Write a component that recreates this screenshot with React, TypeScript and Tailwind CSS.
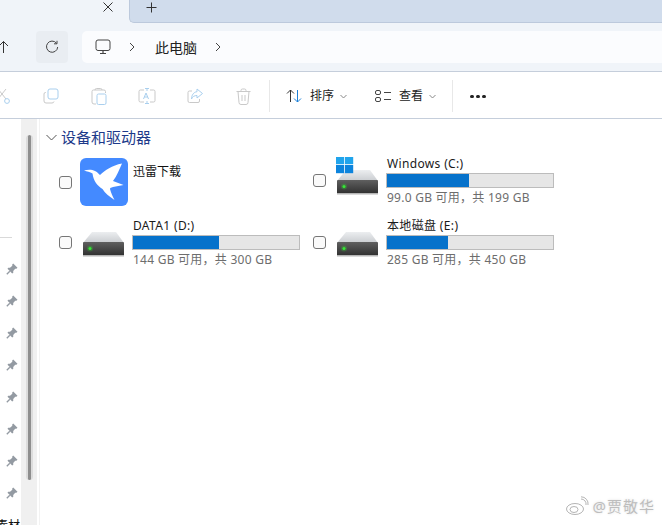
import React from "react";

const sans = "[font-family:'Noto_Sans','Noto_Sans_CJK_SC',sans-serif]";

function Bird() {
  return (
    <div className="w-12 h-12 rounded-[6px] bg-[#448aff] shrink-0 flex items-center justify-center">
      <svg width="48" height="48" viewBox="0 0 48 48">
        <path
          d="M4 12.5 C8 11.5 12 11.5 15 13 C17 14 18.5 15.5 20 17 C25 12 32 7.5 42 5.5 C39 12 37 18 33 23 L43.5 27 L33 29 C31 29.5 30 30 30 31 C31 35 32.5 38 34.5 42 C29 38.5 25 35 22.5 31 C17.5 28 13.5 23 12.5 15.5 C10 14 7 13.5 4 12.5 Z"
          fill="#fff"
        />
      </svg>
    </div>
  );
}

function Disk({ win }: { win?: boolean }) {
  const id = win ? "w" : "n";
  return (
    <svg width="48" height="48" viewBox="0 0 48 48" className="shrink-0">
      <defs>
        <linearGradient id={`top${id}`} x1="0" y1="0" x2="0" y2="1">
          <stop offset="0" stopColor="#eceef0" />
          <stop offset="1" stopColor="#c9ccd0" />
        </linearGradient>
        <linearGradient id={`front${id}`} x1="0" y1="0" x2="0" y2="1">
          <stop offset="0" stopColor="#5f5f5f" />
          <stop offset="1" stopColor="#2f2f2f" />
        </linearGradient>
      </defs>
      <path d="M12 13 H36 L44 24 H3 Z" fill={`url(#top${id})`} />
      <rect x="3" y="23" width="41" height="14" rx="1" fill={`url(#front${id})`} />
      <rect x="3" y="36" width="41" height="1.5" fill="#b5b5b5" />
      <circle cx="10" cy="29.5" r="3" fill="#2ee62e" opacity="0.25" />
      <circle cx="10" cy="29.5" r="1.5" fill="#35e835" />
      {win && (
        <g>
          <rect x="2" y="-1" width="8.2" height="8.2" fill="#20a4ec" />
          <rect x="11" y="-1" width="8.2" height="8.2" fill="#20a4ec" />
          <rect x="2" y="8" width="8.2" height="8.2" fill="#0c84dd" />
          <rect x="11" y="8" width="8.2" height="8.2" fill="#0c84dd" />
        </g>
      )}
    </svg>
  );
}

function Check() {
  return <div className="w-[13px] h-[13px] rounded-[3px] border border-[#767676] bg-[#fafafa] shrink-0" />;
}

function Drive({ name, free, pct, win }: { name: string; free: string; pct: number; win?: boolean }) {
  return (
    <div className="flex items-center h-[61px]">
      <Check />
      <div className="ml-[8px]">
        <Disk win={win} />
      </div>
      <div className="ml-[4px] w-[168px] flex flex-col">
        <div className="pl-[1px] text-[12px] leading-[16px] text-[#1a1a1a] tracking-[0.35px]">{name}</div>
        <div className="h-[15px] mt-[1px] border border-[#bcbcbc] bg-[#e6e6e6]">
          <div className="h-full bg-[#0672cb]" style={{ width: `${pct}%` }} />
        </div>
        <div className="pl-[1px] text-[12px] leading-[16px] mt-[2px] -mb-[1px] text-[#6d6d6d] tracking-[0.25px]">{free}</div>
      </div>
    </div>
  );
}

function Pin() {
  return (
    <svg width="12" height="12" viewBox="0 0 12 12">
      <path d="M7.2 .5 L11.5 4.8 L10.4 5.8 L9.2 5.7 L7.2 8 L7.3 9.8 L6.2 10.5 L1.5 5.8 L2.2 4.8 L4 4.8 L6.3 2.8 L6.2 1.4 Z" fill="#939aa2" />
      <path d="M3.8 8.2 L.8 11.2" stroke="#939aa2" strokeWidth="1.3" fill="none" />
    </svg>
  );
}

function ToolBtn({ children }: { children: React.ReactNode }) {
  return <div className="w-[48px] flex items-center justify-center shrink-0">{children}</div>;
}

const blue = "#a9cfee";
const gray = "#c9c9c9";

export default function App() {
  return (
    <div className={`w-[662px] h-[525px] overflow-hidden relative bg-white flex flex-col ${sans}`}>
      {/* tabs */}
      <div className="h-[23px] flex bg-[#f0f4f9] shrink-0">
        <div className="w-[129px] flex justify-end pr-[15px] pt-[1px] shrink-0">
          <svg width="12" height="12" viewBox="0 0 12 12">
            <path d="M1.5 1.5 L10.5 10.5 M10.5 1.5 L1.5 10.5" stroke="#333" strokeWidth="1" fill="none" />
          </svg>
        </div>
        <div className="flex-1 bg-[#d0dcec] rounded-bl-[5px] border-l border-b border-[#bcc9dc] pl-[16px] pt-[2px]">
          <svg width="11" height="11" viewBox="0 0 11 11">
            <path d="M5.5 0.5 V10.5 M0.5 5.5 H10.5" stroke="#333" strokeWidth="1" fill="none" />
          </svg>
        </div>
      </div>
      {/* address row */}
      <div className="h-[49px] shrink-0 bg-[#f0f4f9] border-b border-[#c5cedb] flex items-start pt-[8px]">
        <div className="w-[36px] h-[32px] flex items-center shrink-0">
          <svg width="10" height="14" viewBox="0 0 10 14" className="-ml-[1px]">
            <path d="M4.5 13 V1.5 M0 6 L4.5 1.5 L9 6" stroke="#333" strokeWidth="1" fill="none" />
          </svg>
        </div>
        <div className="w-[32px] h-[32px] rounded-[4px] bg-[#e9edf2] flex items-center justify-center shrink-0">
          <svg width="14" height="14" viewBox="0 0 14 14">
            <path d="M11.5 3.2 A5.6 5.6 0 1 0 12.7 7" stroke="#444" strokeWidth="1" fill="none" />
            <path d="M12 .8 V3.8 H9" stroke="#444" strokeWidth="1" fill="none" />
          </svg>
        </div>
        <div className="ml-[14px] flex-1 h-[32px] bg-[#fbfcfe] rounded-l-[5px] flex items-center pl-[13px]">
          <svg width="16" height="16" viewBox="0 0 16 16">
            <rect x="1" y="1" width="14" height="10.5" rx="2" stroke="#444" fill="none" />
            <path d="M5 14.5 H11 M8 11.5 V14.5" stroke="#444" strokeWidth="1.2" fill="none" />
          </svg>
          <svg width="6" height="10" viewBox="0 0 6 10" className="ml-[18px]">
            <path d="M1 1 L5 5 L1 9" stroke="#444" fill="none" />
          </svg>
          <span className="ml-[20px] text-[14px] text-[#222] w-[42px] whitespace-nowrap">此电脑</span>
          <svg width="6" height="10" viewBox="0 0 6 10" className="ml-[18px]">
            <path d="M1 1 L5 5 L1 9" stroke="#444" fill="none" />
          </svg>
        </div>
      </div>
      {/* toolbar */}
      <div className="h-[47px] shrink-0 bg-white border-b border-[#c5cedb] flex items-center pt-[2px]">
        <div className="w-[27px] shrink-0">
          <svg width="18" height="16" viewBox="0 0 18 16" className="-ml-[7px]">
            <path d="M13 1 L5 11 M5 1 L13 11" stroke={gray} fill="none" />
            <circle cx="4" cy="13" r="2.4" stroke={blue} fill="none" />
            <circle cx="14" cy="13" r="2.4" stroke={blue} fill="none" />
          </svg>
        </div>
        <div className="flex">
          <ToolBtn>
            <svg width="16" height="16" viewBox="0 0 16 16" fill="none">
              <path d="M3 4.5 H2.5 A1.5 1.5 0 0 0 1 6 V13 A2 2 0 0 0 3 15 H9 A2 2 0 0 0 11 13.5" stroke={gray} />
              <rect x="5" y="1" width="10" height="10" rx="2" stroke={blue} />
            </svg>
          </ToolBtn>
          <ToolBtn>
            <svg width="16" height="18" viewBox="0 0 16 18" fill="none">
              <path d="M4 3 H2.5 A1.5 1.5 0 0 0 1 4.5 V15 A2 2 0 0 0 3 17 H5 M11 3 H13 A1.5 1.5 0 0 1 14.5 4.5 V6 M4 3 A1.5 1.5 0 0 1 5.5 1.5 H9.5 A1.5 1.5 0 0 1 11 3 Z" stroke={gray} />
              <rect x="6" y="7" width="9" height="10.5" rx="1.5" stroke={blue} />
            </svg>
          </ToolBtn>
          <ToolBtn>
            <svg width="18" height="16" viewBox="0 0 18 16" fill="none">
              <path d="M6 2 H2.5 A1.5 1.5 0 0 0 1 3.5 V12.5 A1.5 1.5 0 0 0 2.5 14 H6 M12 2 H15.5 A1.5 1.5 0 0 1 17 3.5 V12.5 A1.5 1.5 0 0 1 15.5 14 H12" stroke={gray} />
              <path d="M7 .5 H11 M7 15.5 H11 M9 .5 V3 M9 13 V15.5 M5.5 11 L8 5 L10.5 11 M6.3 9 H9.7" stroke={blue} />
            </svg>
          </ToolBtn>
          <ToolBtn>
            <svg width="16" height="16" viewBox="0 0 16 16" fill="none">
              <path d="M5 3 H2.5 A1.5 1.5 0 0 0 1 4.5 V13 A1.5 1.5 0 0 0 2.5 14.5 H11 A1.5 1.5 0 0 0 12.5 13 V11" stroke={gray} />
              <path d="M10 1 L15.5 5.5 L10 10 V7.5 C7.5 7.5 5.5 8.5 4.5 11 C4.5 7.5 6.5 4 10 3.7 Z" stroke={blue} />
            </svg>
          </ToolBtn>
          <ToolBtn>
            <svg width="15" height="17" viewBox="0 0 15 17" fill="none" stroke={gray}>
              <path d="M.5 3.5 H14.5 M5 3.5 V2.5 A1.5 1.5 0 0 1 6.5 1 H8.5 A1.5 1.5 0 0 1 10 2.5 V3.5 M2 3.5 L3 14.5 A2 2 0 0 0 5 16.5 H10 A2 2 0 0 0 12 14.5 L13 3.5 M6 7 V13 M9 7 V13" />
            </svg>
          </ToolBtn>
        </div>
        <div className="w-px h-[32px] bg-[#e8e8e8] ml-[2px] shrink-0" />
        <svg width="16" height="14" viewBox="0 0 16 14" fill="none" className="ml-[16px] shrink-0">
          <path d="M4.5 13 V1 M1 4.5 L4.5 1 L8 4.5" stroke="#333" />
          <path d="M11.5 1 V13 M8 9.5 L11.5 13 L15 9.5" stroke="#1b80d8" />
        </svg>
        <span className="ml-[8px] text-[12px] text-[#222] w-[24px] whitespace-nowrap">排序</span>
        <svg width="7" height="5" viewBox="0 0 7 5" className="ml-[6px]" fill="none">
          <path d="M.5 1 L3.5 4 L6.5 1" stroke="#888" />
        </svg>
        <svg width="16" height="12" viewBox="0 0 16 12" fill="none" className="ml-[28px] shrink-0">
          <rect x=".5" y=".5" width="5" height="4" rx="1.5" stroke="#444" />
          <rect x=".5" y="7.5" width="5" height="4" rx="1.5" stroke="#444" />
          <path d="M9 2.5 H16 M9 9.5 H16" stroke="#444" />
        </svg>
        <span className="ml-[8px] text-[12px] text-[#222] w-[24px] whitespace-nowrap">查看</span>
        <svg width="7" height="5" viewBox="0 0 7 5" className="ml-[6px]" fill="none">
          <path d="M.5 1 L3.5 4 L6.5 1" stroke="#888" />
        </svg>
        <div className="w-px h-[32px] bg-[#e8e8e8] ml-[16px] shrink-0" />
        <div className="ml-[17px] flex gap-[2px]">
          <div className="w-[4px] h-[3px] rounded-full bg-[#222]" />
          <div className="w-[4px] h-[3px] rounded-full bg-[#222]" />
          <div className="w-[4px] h-[3px] rounded-full bg-[#222]" />
        </div>
      </div>
      {/* body */}
      <div className="flex-1 flex min-h-0">
        <div className="w-[21px] shrink-0 flex flex-col overflow-hidden">
          <div className="h-[119px] shrink-0 border-b border-[#d9d9d9] mr-[9px]" />
          <div className="flex flex-col items-center mt-[15px] pl-[3px]">
            {[0, 1, 2, 3, 4, 5, 6, 7].map((i) => (
              <div key={i} className="h-[32px] w-full flex items-center justify-center shrink-0">
                <Pin />
              </div>
            ))}
          </div>
          <div className="mt-[10px] text-[12px] leading-[14px] text-[#111] whitespace-nowrap -ml-[4px]">素材</div>
        </div>
        <div className="w-[16px] bg-[#f0f0f0] shrink-0 flex justify-center pt-[16px]">
          <div className="w-[7px] h-[345px] rounded-full bg-[#dcdcdc] flex justify-center">
            <div className="w-[3px] h-full rounded-full bg-[#8e8e8e]" />
          </div>
        </div>
        <div className="w-[2px] shrink-0" />
        <div className="w-px shrink-0 bg-[#f2f2f2]" />
        <div className="flex-1 pl-[6px] pt-[8px]">
          <div className="flex items-center h-[21px]">
            <svg width="11" height="7" viewBox="0 0 11 7" fill="none">
              <path d="M.5 1 L5.5 6 L10.5 1" stroke="#555" />
            </svg>
            <span className="ml-[4px] text-[15px] text-[#1d3a8a] whitespace-nowrap">设备和驱动器</span>
          </div>
          <div className="grid grid-cols-[254px_254px] mt-[8px] pl-[13px]">
            <div className="flex items-center h-[52px]">
              <Check />
              <div className="ml-[8px]">
                <Bird />
              </div>
              <div className="ml-[5px] self-start mt-[8px] text-[12px] leading-[16px] text-[#111]">迅雷下载</div>
            </div>
            <div className="-mt-[6px]">
              <Drive win name="Windows (C:)" free="99.0 GB 可用，共 199 GB" pct={49.5} />
            </div>
            <div className="mt-[1px]">
              <Drive name="DATA1 (D:)" free="144 GB 可用，共 300 GB" pct={52} />
            </div>
            <div className="mt-[1px]">
              <Drive name="本地磁盘 (E:)" free="285 GB 可用，共 450 GB" pct={37} />
            </div>
          </div>
        </div>
      </div>
      {/* watermark */}
      <div className="absolute right-[7px] bottom-[8px] flex items-center gap-[3px] text-[#bdbdbd] [text-shadow:0_0_3px_#dedede]">
        <svg width="25" height="20" viewBox="0 0 25 20" fill="none" stroke="#b5b5b5">
          <ellipse cx="10" cy="13" rx="8.5" ry="5.5" />
          <ellipse cx="9" cy="13.5" rx="4" ry="3" />
          <path d="M16 3 A5 5 0 0 1 21 9 M16 .8 A7 7 0 0 1 23 9" />
        </svg>
        <span className="text-[15px] tracking-[1px]">@贾敬华</span>
      </div>
    </div>
  );
}
